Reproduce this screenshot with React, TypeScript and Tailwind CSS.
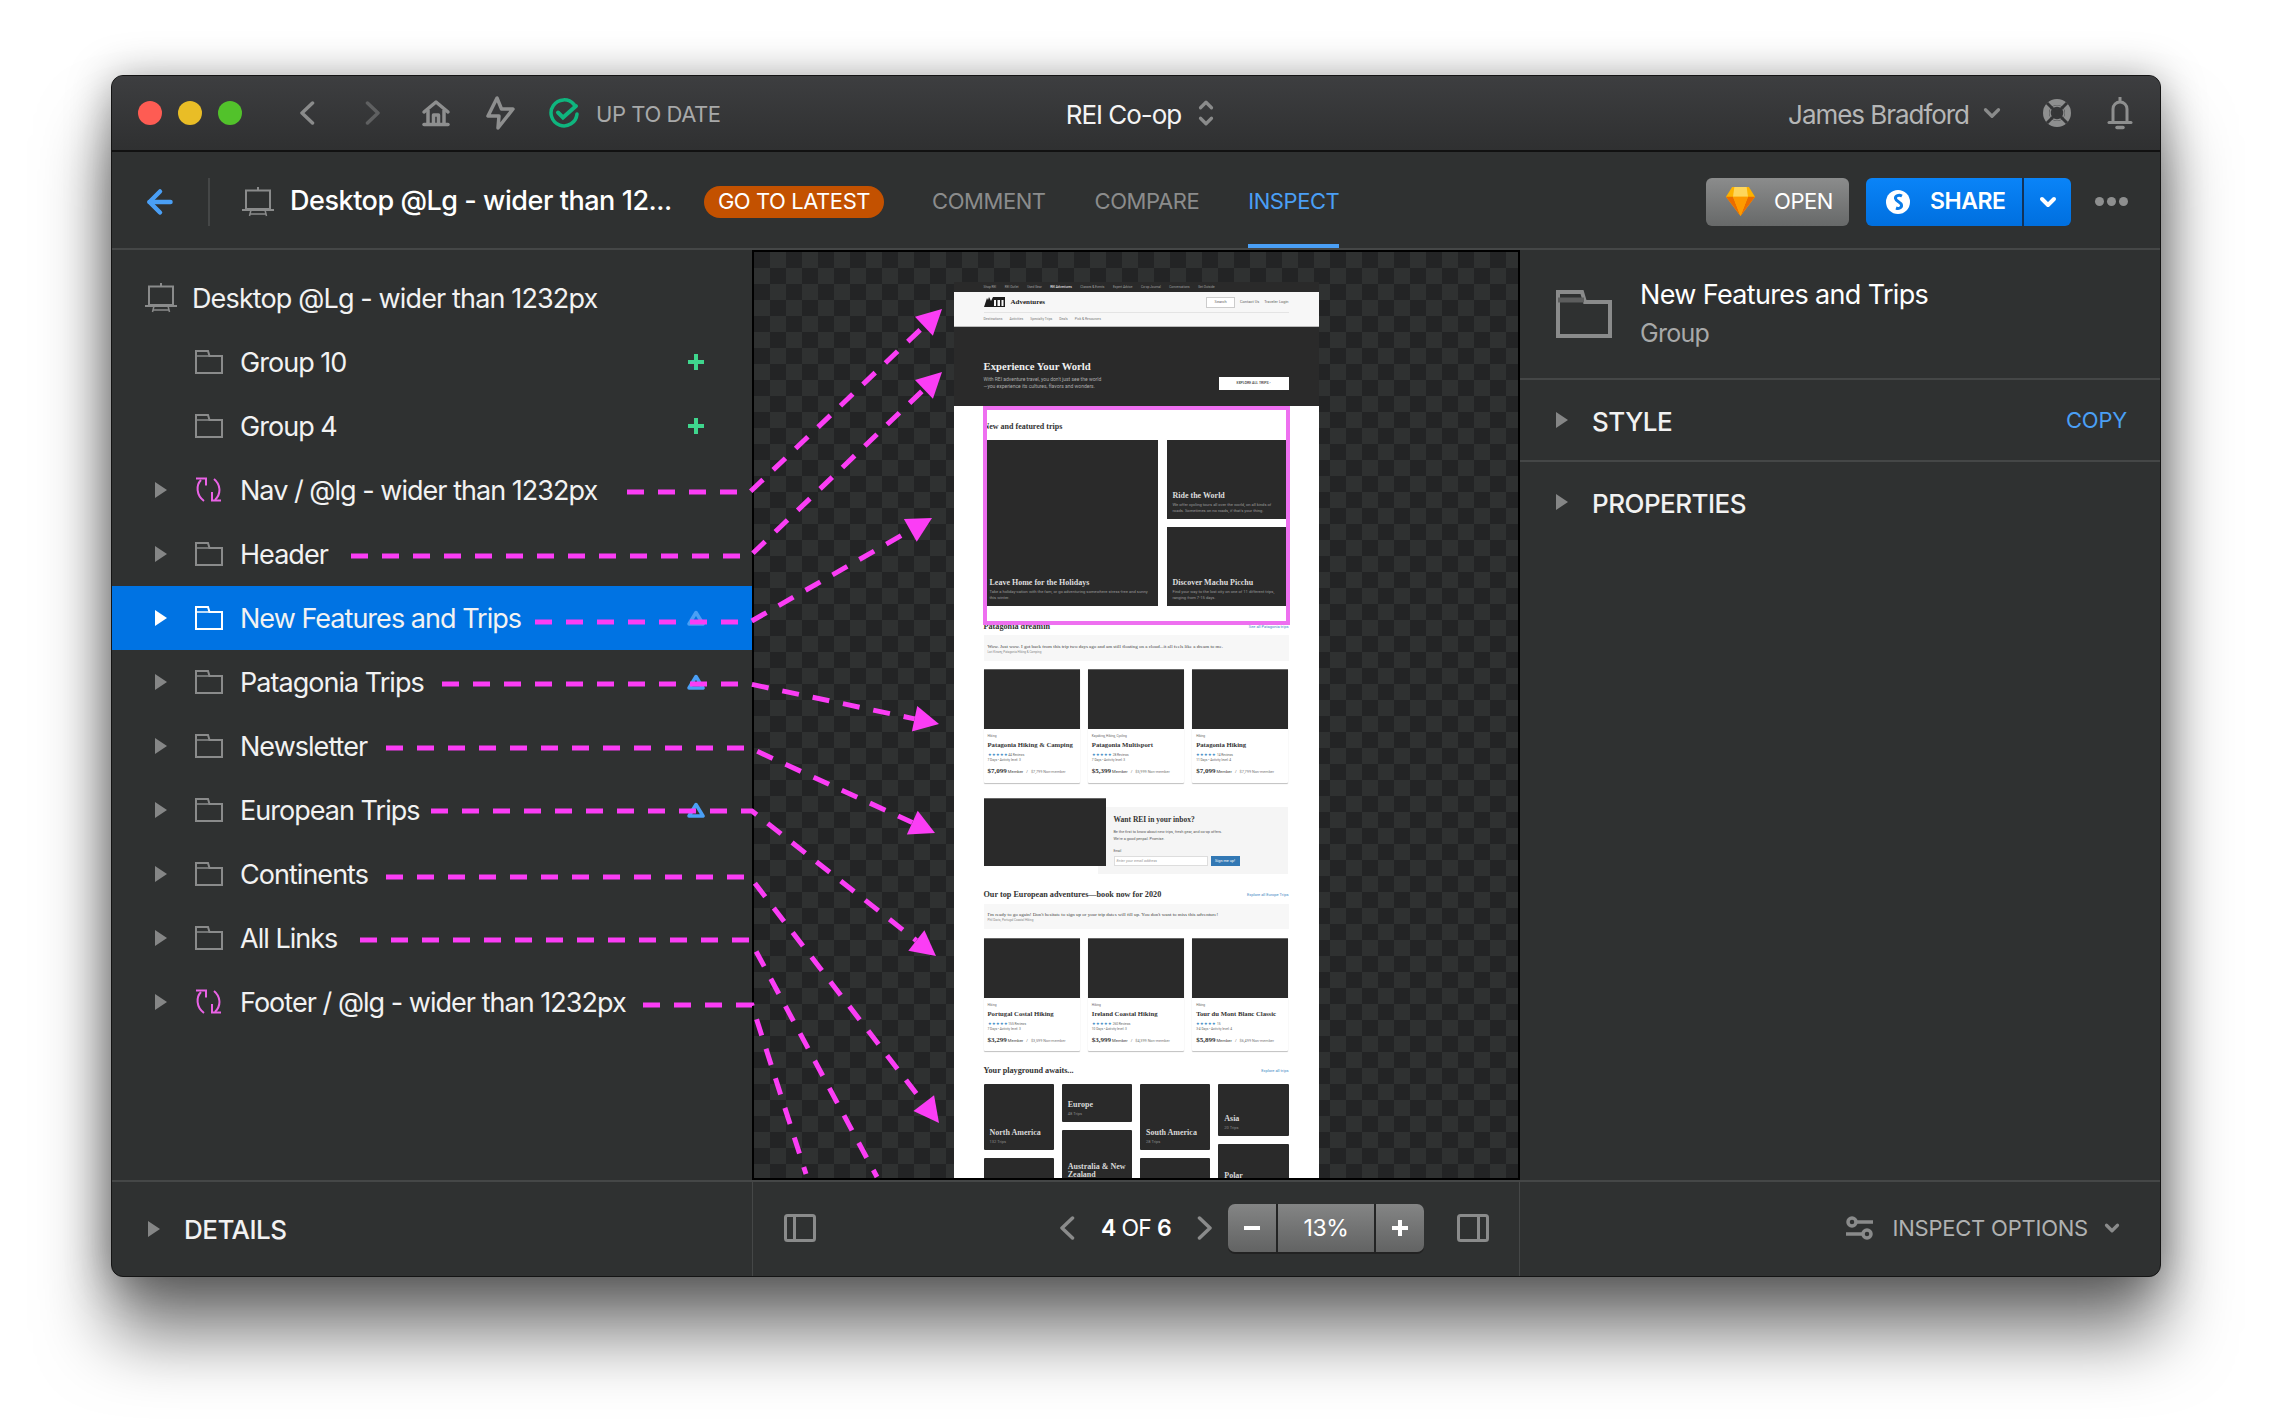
import type { ReactNode } from 'react';
import { ChevronDown, ChevronUp, ArrowLeft } from 'lucide-react';

type RowIcon = 'folder' | 'sync';

interface LayerRow {
    name: string;
    icon: RowIcon;
    caret?: boolean;
    badge?: 'plus' | 'triangle';
    selected?: boolean;
}

const layers: LayerRow[] = [
    { name: 'Group 10', icon: 'folder', badge: 'plus' },
    { name: 'Group 4', icon: 'folder', badge: 'plus' },
    { name: 'Nav / @lg - wider than 1232px', icon: 'sync', caret: true },
    { name: 'Header', icon: 'folder', caret: true },
    { name: 'New Features and Trips', icon: 'folder', caret: true, badge: 'triangle', selected: true },
    { name: 'Patagonia Trips', icon: 'folder', caret: true, badge: 'triangle' },
    { name: 'Newsletter', icon: 'folder', caret: true },
    { name: 'European Trips', icon: 'folder', caret: true, badge: 'triangle' },
    { name: 'Continents', icon: 'folder', caret: true },
    { name: 'All Links', icon: 'folder', caret: true },
    { name: 'Footer / @lg - wider than 1232px', icon: 'sync', caret: true },
];

// dashed leaders, page coordinates: start of the run, where it bends, arrow tip
const leaders: { x: number; y: number; bend: number; tip: [number, number]; head: boolean }[] = [
    { x: 627, y: 492, bend: 750, tip: [942, 309], head: true },
    { x: 351, y: 556, bend: 750, tip: [942, 372], head: true },
    { x: 535, y: 622, bend: 750, tip: [932, 518], head: true },
    { x: 442, y: 684, bend: 750, tip: [939, 724], head: true },
    { x: 386, y: 748, bend: 750, tip: [935, 833], head: true },
    { x: 431, y: 811, bend: 752, tip: [936, 956], head: true },
    { x: 386, y: 877, bend: 750, tip: [939, 1123], head: true },
    { x: 360, y: 940, bend: 750, tip: [877, 1177], head: false },
    { x: 643, y: 1005, bend: 752, tip: [806, 1174], head: false },
];

function Leaders() {
    return (
        <svg className="absolute left-0 top-0 z-20 pointer-events-none" width="2272" height="1424" fill="none">
            {leaders.map((l) => {
                const dx = l.tip[0] - l.bend;
                const dy = l.tip[1] - l.y;
                const len = Math.hypot(dx, dy);
                const ux = dx / len;
                const uy = dy / len;
                const bx = l.tip[0] - ux * 25;
                const by = l.tip[1] - uy * 25;
                const end = l.head ? `${bx} ${by}` : `${l.tip[0]} ${l.tip[1]}`;
                return (
                    <g key={l.y}>
                        <path d={`M${l.x} ${l.y} H${l.bend} L${end}`} stroke="#fb3df5" strokeWidth="5" strokeDasharray="17 14" />
                        {l.head && (
                            <polygon
                                fill="#fb3df5"
                                points={`${l.tip[0]},${l.tip[1]} ${bx - uy * 13},${by + ux * 13} ${bx + uy * 13},${by - ux * 13}`}
                            />
                        )}
                    </g>
                );
            })}
        </svg>
    );
}

function NavChevron({ dir, color, className = '' }: { dir: 'left' | 'right'; color: string; className?: string }) {
    return (
        <svg className={className} width="16" height="24" viewBox="0 0 16 24" fill="none" stroke={color} strokeWidth="3.5" strokeLinecap="round" strokeLinejoin="round">
            <path d={dir === 'left' ? 'M13.5 2L3 12l10.5 10' : 'M2.5 2L13 12 2.5 22'} />
        </svg>
    );
}

function FolderIcon({ selected = false }: { selected?: boolean }) {
    const c = selected ? '#ffffff' : '#8a8b8b';
    return (
        <svg width="28" height="24" viewBox="0 0 28 24" fill="none" stroke={c} strokeWidth="2">
            <path d="M1 23V1h12l1.5 5H27v17z" />
            <path d="M1 6h13.5" strokeWidth="1.5" />
        </svg>
    );
}

function SyncIcon() {
    return (
        <svg width="26" height="26" viewBox="0 0 26 26" fill="none" stroke="#ea63e6" strokeWidth="2">
            <path d="M6 3C1 8 1 18 9 24" />
            <path d="M1 1.5h10v7" />
            <path d="M19 2c6 5 8 14 1 21" />
            <path d="M17 15v8.500h9" />
        </svg>
    );
}

function EaselIcon() {
    return (
        <svg width="32" height="30" viewBox="0 0 32 30" fill="none" stroke="#8a8b8b" strokeWidth="2">
            <path d="M16 0v3M4 3.500h24V22H4zM0 23h32" />
            <path d="M9 23l-1.500 6M23 23l1.500 6M8 27h16" strokeWidth="1.500" />
        </svg>
    );
}

function Caret({ light = false }: { light?: boolean }) {
    return (
        <span
            className={`w-0 h-0 border-y-[8px] border-y-transparent border-l-[12px] ${light ? 'border-l-white' : 'border-l-[#858686]'}`}
        />
    );
}

function LayerItem({ row }: { row: LayerRow }) {
    return (
        <div className={`h-16 flex items-center ${row.selected ? 'bg-[#0073e3]' : ''}`}>
            <div className="w-[40px] flex justify-start shrink-0 ml-[43px]">
                {row.caret && <Caret light={row.selected} />}
            </div>
            <div className="w-[45px] shrink-0 flex justify-start">
                {row.icon === 'folder' ? <FolderIcon selected={row.selected} /> : <SyncIcon />}
            </div>
            <span className="mt-[3px] text-[27px] tracking-[-0.036em] text-[#f2f2f2] whitespace-nowrap flex-1">{row.name}</span>
            {row.badge === 'plus' && (
                <svg className="mr-[48px]" width="16" height="16" viewBox="0 0 16 16" stroke="#3fd68d" strokeWidth="4">
                    <path d="M8 0v16M0 8h16" />
                </svg>
            )}
            {row.badge === 'triangle' && (
                <svg className="mr-[47px]" width="18" height="16" viewBox="0 0 18 16" fill="none" stroke="#4a9ff5" strokeWidth="3.5" strokeLinejoin="round">
                    <path d="M9 2.500L16 14H2z" />
                </svg>
            )}
        </div>
    );
}

/* ---- the little artboard in the middle ---- */

const serif = "font-['Liberation_Serif',serif]";

function TripCard({ tag, title, stars, meta, price, other }: { tag: string; title: string; stars: string; meta: string; price: string; other: string }) {
    return (
        <div className="flex-1 bg-white shadow-[0_1px_1px_rgba(0,0,0,0.25)] rounded-[1px] flex flex-col">
            <div className="h-[60px] bg-[#2a2a2a] border-t border-[#666]" />
            <div className="px-[4px] pt-[5px] flex flex-col text-[#666] text-[3.2px] leading-[4px]">
                <span>{tag}</span>
                <span className={`${serif} font-bold text-[#333] text-[6.7px] leading-[8px] mt-[3px] whitespace-nowrap`}>{title}</span>
                <span className="mt-[4px] whitespace-nowrap">
                    <span className="text-[#2f7fc1] text-[4px] leading-[4px]">★★★★★</span> {stars}
                </span>
                <span className="mt-[1px] whitespace-nowrap">{meta}</span>
                <span className="mt-[5px] whitespace-nowrap flex items-baseline h-[8px] leading-[8px]">
                    <span className={`${serif} font-bold text-[#333] text-[7px]`}>{price}</span>
                    <span className="text-[#444] text-[4.2px] ml-[1px]">Member</span>
                    <span className="text-[4px] mx-[3px]">/</span>
                    <span className="text-[3.8px] text-[#777]">{other}</span>
                </span>
            </div>
        </div>
    );
}

function SectionHead({ title, link }: { title: string; link: string }) {
    return (
        <div className="flex items-center justify-between">
            <span className={`${serif} font-bold text-[#333] text-[8.2px] leading-[12px]`}>{title}</span>
            <span className="text-[#3f88c5] text-[4px]">{link}</span>
        </div>
    );
}

function Quote({ text, by, className }: { text: string; by: string; className: string }) {
    return (
        <div className={`bg-[#f7f7f7] px-[4px] flex flex-col justify-center ${className}`}>
            <span className={`${serif} text-[#444] text-[5px] leading-[7px]`}>{text}</span>
            <span className="text-[#888] text-[3px] leading-[4px]">{by}</span>
        </div>
    );
}

function PlaceTile({ name, trips, h }: { name: string; trips: string; h: string }) {
    return (
        <div className={`bg-[#2a2a2a] rounded-[1px] shrink-0 px-[6px] pb-[6px] flex flex-col justify-end ${h}`}>
            {name && <span className={`${serif} font-bold text-[#d8d8d8] text-[8px] leading-[8px]`}>{name}</span>}
            {trips && <span className="text-[#8a8a8a] text-[4px] leading-[5px] mt-[2px]">{trips}</span>}
        </div>
    );
}

function BigTile({ title, blurb, className }: { title: string; blurb: string; className: string }) {
    return (
        <div className={`bg-[#2a2a2a] px-[6px] pb-[6px] flex flex-col justify-end ${className}`}>
            <span className={`${serif} font-bold text-[#ddd] text-[8px] leading-[10px] whitespace-nowrap`}>{title}</span>
            <span className="text-[#999] text-[4.100px] leading-[5.300px] mt-[1px]">{blurb}</span>
        </div>
    );
}

function Artboard() {
    return (
        <div className="relative w-[365px] h-[896px] mt-[30px] bg-white font-['Roboto',sans-serif] shrink-0 overflow-hidden">
            {/* nav strip */}
            <div className="h-[10px] bg-[#2a2a2a] pl-[30px] flex items-center gap-[8.5px] text-[3.2px] text-[#a0a0a0] whitespace-nowrap">
                <span>Shop REI</span><span>REI Outlet</span><span>Used Gear</span>
                <span className="text-white">REI Adventures</span>
                <span>Classes &amp; Events</span><span>Expert Advice</span><span>Co-op Journal</span><span>Conversations</span><span>Get Outside</span>
            </div>
            {/* header */}
            <div className="h-[34px] bg-[#f7f7f7] px-[30px] flex flex-col">
                <div className="h-[21px] flex items-center border-b border-[#e4e4e4]">
                    <svg width="21" height="14" viewBox="0 0 21 14" fill="#1d1d1d" className="mt-[1px]">
                        <path d="M0 11L3 2l1 2 1-3 2 4 2-4h12v10H0z" />
                        <path d="M10 4h2v6h-2zM13.500 4h2.500v6h-2.500zM17.500 4h2v6h-2z" fill="#f7f7f7" />
                    </svg>
                    <span className={`${serif} font-bold text-[#222] text-[7px] ml-[6px]`}>Adventures</span>
                    <div className="ml-auto flex items-center gap-[5px] text-[3.900px] text-[#666] whitespace-nowrap">
                        <span className="w-[29px] h-[11px] bg-white border border-[#ccc] flex items-center justify-center">Search</span>
                        <span>Contact Us</span>
                        <span>Traveler Login</span>
                    </div>
                </div>
                <div className="flex-1 flex items-center gap-[7px] text-[3.4px] text-[#777] whitespace-nowrap">
                    <span>Destinations</span><span>Activities</span><span>Specialty Trips</span><span>Deals</span><span>Pick &amp; Resources</span>
                </div>
            </div>
            {/* hero */}
            <div className="h-[80px] bg-[#2a2a2a] border-t border-[#bbb] px-[30px] pb-[16px] flex items-end justify-between">
                <div className="flex flex-col">
                    <span className={`${serif} font-bold text-[#eee] text-[10.7px] leading-[14px] mb-[3px]`}>Experience Your World</span>
                    <span className="text-[#aaa] text-[5px] leading-[7px]">With REI adventure travel, you don't just see the world</span>
                    <span className="text-[#aaa] text-[5px] leading-[7px]">—you experience its cultures, flavors and wonders.</span>
                </div>
                <span className="w-[70px] h-[13px] bg-white flex items-center justify-center text-[#333] text-[3.5px] font-medium whitespace-nowrap">EXPLORE ALL TRIPS  ›</span>
            </div>

            <div className="px-[30px] flex flex-col">
                {/* new and featured */}
                <div className={`${serif} font-bold text-[#333] text-[8px] leading-[14px] mt-[14px] mb-[6px]`}>New and featured trips</div>
                <div className="h-[166px] flex gap-[9px]">
                    <BigTile className="w-[174px]" title="Leave Home for the Holidays" blurb="Take a holiday-cation with the fam, or go adventuring somewhere stress-free and sunny this winter." />
                    <div className="flex-1 flex flex-col gap-[8px]">
                        <BigTile className="flex-1" title="Ride the World" blurb="We offer cycling tours all over the world, on all kinds of roads. Sometimes on no roads, if that's your thing." />
                        <BigTile className="flex-1" title="Discover Machu Picchu" blurb="Find your way to the lost city on one of 11 different trips, ranging from 7-15 days." />
                    </div>
                </div>

                {/* patagonia */}
                <div className="mt-[15px]">
                    <SectionHead title="Patagonia dreamin'" link="See all Patagonia trips" />
                </div>
                <Quote className="mt-[2px] h-[26px]" text="Wow. Just wow. I got back from this trip two days ago and am still floating on a cloud...it all feels like a dream to me." by="Lori Kinsey, Patagonia Hiking & Camping" />
                <div className="mt-[8px] h-[114px] flex gap-[8px]">
                    <TripCard tag="Hiking" title="Patagonia Hiking & Camping" stars="44 Reviews" meta="7 Days  •  Activity level: 3" price="$7,099" other="$7,799 Non-member" />
                    <TripCard tag="Kayaking, Hiking, Cycling" title="Patagonia Multisport" stars="28 Reviews" meta="7 Days  •  Activity level: 3" price="$5,399" other="$5,999 Non-member" />
                    <TripCard tag="Hiking" title="Patagonia Hiking" stars="14 Reviews" meta="11 Days  •  Activity level: 4" price="$7,099" other="$7,799 Non-member" />
                </div>

                {/* newsletter */}
                <div className="mt-[15px] h-[76px] flex items-start">
                    <div className="relative z-10 w-[122px] h-[68px] bg-[#2a2a2a] border-t border-[#666] shrink-0" />
                    <div className="-ml-[8px] mt-[9px] w-[190px] h-[67px] bg-[#f5f5f5] pl-[16px] pt-[8px] flex flex-col text-[#555] text-[3.8px] leading-[7px]">
                        <span className={`${serif} font-bold text-[#333] text-[7.5px] leading-[10px] mb-[3px]`}>Want REI in your inbox?</span>
                        <span>Be the first to know about new trips, fresh gear, and co-op offers.</span>
                        <span>We're a good penpal. Promise.</span>
                        <span className="mt-[7px] leading-[5px] text-[3.2px]">Email</span>
                        <div className="flex gap-[3px] mt-[1.5px]">
                            <span className="w-[94px] h-[10px] bg-white border border-[#ddd] pl-[2px] text-[#999] leading-[8px] italic">Enter your email address</span>
                            <span className="w-[29px] h-[10px] bg-[#3278b4] text-white text-center leading-[10px]">Sign me up!</span>
                        </div>
                    </div>
                </div>

                {/* europe */}
                <div className="mt-[15px]">
                    <SectionHead title="Our top European adventures—book now for 2020" link="Explore all Europe Trips" />
                </div>
                <Quote className="mt-[3px] h-[25px]" text="I'm ready to go again! Don't hesitate to sign up or your trip dates will fill up. You don't want to miss this adventure!" by="Phil Davis, Portugal Coastal Hiking" />
                <div className="mt-[9px] h-[113px] flex gap-[8px]">
                    <TripCard tag="Hiking" title="Portugal Costal Hiking" stars="155 Reviews" meta="7 Days  •  Activity level: 3" price="$3,299" other="$3,599 Non-member" />
                    <TripCard tag="Hiking" title="Ireland Coastal Hiking" stars="260 Reviews" meta="10 Days  •  Activity level: 3" price="$3,999" other="$4,399 Non-member" />
                    <TripCard tag="Hiking" title="Tour du Mont Blanc Classic" stars="15" meta="3-4 Days  •  Activity level: 4" price="$5,899" other="$6,499 Non-member" />
                </div>

                {/* playground */}
                <div className="mt-[14px] mb-[7px]">
                    <SectionHead title="Your playground awaits..." link="Explore all trips" />
                </div>
                <div className="flex gap-[8px]">
                    <div className="flex-1 flex flex-col gap-[8px]">
                        <PlaceTile name="North America" trips="132 Trips" h="h-[66px]" />
                        <PlaceTile name="" trips="" h="h-[66px]" />
                    </div>
                    <div className="flex-1 flex flex-col gap-[8px]">
                        <PlaceTile name="Europe" trips="48 Trips" h="h-[38px]" />
                        <PlaceTile name="Australia & New Zealand" trips="32 Trips" h="h-[62px]" />
                    </div>
                    <div className="flex-1 flex flex-col gap-[8px]">
                        <PlaceTile name="South America" trips="28 Trips" h="h-[66px]" />
                        <PlaceTile name="" trips="" h="h-[66px]" />
                    </div>
                    <div className="flex-1 flex flex-col gap-[8px]">
                        <PlaceTile name="Asia" trips="20 Trips" h="h-[52px]" />
                        <PlaceTile name="Polar" trips="12 Trips" h="h-[49px]" />
                    </div>
                </div>
            </div>

            {/* selection box */}
            <div className="absolute left-[29px] top-[124px] w-[307px] h-[219px] border-[4px] border-[#ee6ff0]" />
        </div>
    );
}

function SectionRow({ label, children }: { label: string; children?: ReactNode }) {
    return (
        <div className="h-[80px] flex items-center pl-[36px] pr-[33px]">
            <Caret />
            <span className="ml-[24px] mt-[2px] text-[26px] font-medium tracking-[-0.02em] text-[#f2f2f2] flex-1">{label}</span>
            {children}
        </div>
    );
}

export default function App() {
    return (
        <div className="relative w-[2272px] h-[1424px] bg-white overflow-hidden pt-[75px] pl-[111px] font-['Inter',sans-serif]">
            <div className="w-[2050px] h-[1202px] rounded-[12px] overflow-hidden border border-[#141414] bg-[#2f3131] flex flex-col shadow-[0_58px_70px_rgba(0,0,0,0.52),0_4px_44px_rgba(0,0,0,0.38)]">
                {/* title bar */}
                <div className="h-[76px] shrink-0 flex items-center border-b-2 border-[#111] bg-gradient-to-b from-[#3d3e40] to-[#2f3031]">
                    <div className="w-[683px] flex items-center pl-[26px]">
                        <span className="w-6 h-6 rounded-full bg-[#fe5c53]" />
                        <span className="w-6 h-6 rounded-full bg-[#e9bd26] ml-4" />
                        <span className="w-6 h-6 rounded-full bg-[#52c22b] ml-4" />
                        <NavChevron className="ml-[57px]" dir="left" color="#8a8b8b" />
                        <NavChevron className="ml-[50px]" dir="right" color="#5f6061" />
                        <svg className="ml-[40px]" width="30" height="28" viewBox="0 0 30 28" fill="none" stroke="#8e8f8f" strokeWidth="3.5" strokeLinejoin="round">
                            <path d="M3 13L15 3l12 10" strokeLinecap="round" />
                            <path d="M7 11v14M23 11v14M12.500 25v-9h5v9" />
                            <path d="M3 25.500h24" strokeLinecap="round" />
                        </svg>
                        <svg className="ml-[34px]" width="30" height="34" viewBox="0 0 30 34" fill="none" stroke="#8e8f8f" strokeWidth="3.5" strokeLinejoin="round">
                            <path d="M12 2L3 20h11l-1 12 15-19H16.500z" />
                        </svg>
                        <svg className="ml-[34px]" width="30" height="30" viewBox="0 0 30 30" fill="none" stroke="#0fb57e" strokeWidth="3.5" strokeLinecap="round">
                            <path d="M25 6.500A13 13 0 1 0 28 16" />
                            <path d="M9 14.500l5 5L27 8" strokeWidth="4" />
                        </svg>
                        <span className="ml-[17px] mt-[2px] text-[22px] tracking-[-0.02em] text-[#a8a9a9]">UP TO DATE</span>
                    </div>
                    <div className="w-[682px] flex items-center justify-center pl-[11px]">
                        <span className="mt-[2px] text-[26px] tracking-[-0.04em] text-[#f4f4f4]">REI Co-op</span>
                        <div className="ml-[14px] flex flex-col -space-y-[6px] text-[#8a8b8b]">
                            <ChevronUp size={22} strokeWidth={3.5} />
                            <ChevronDown size={22} strokeWidth={3.5} />
                        </div>
                    </div>
                    <div className="flex-1 flex items-center justify-end pr-[27px]">
                        <span className="mt-[2px] text-[26px] tracking-[-0.04em] text-[#b5b6b6]">James Bradford</span>
                        <ChevronDown className="ml-[10px] text-[#8a8b8b]" size={26} strokeWidth={3} />
                        <svg className="ml-[38px]" width="28" height="28" viewBox="0 0 28 28" fill="none">
                            <circle cx="14" cy="14" r="11" stroke="#8e8f8f" strokeWidth="6" />
                            <circle cx="14" cy="14" r="7" stroke="#8e8f8f" strokeWidth="1.5" />
                            <path d="M4 4l20 20M24 4L4 24" stroke="#343536" strokeWidth="3" />
                        </svg>
                        <svg className="ml-[36px]" width="26" height="34" viewBox="0 0 26 34" fill="none" stroke="#8e8f8f" strokeWidth="3">
                            <path d="M13 1v4M6 26V13a7 7 0 0 1 14 0v13" />
                            <path d="M2 26.500h22" strokeLinecap="round" />
                            <path d="M10 31.500h6" strokeWidth="3.5" strokeLinecap="round" />
                        </svg>
                    </div>
                </div>

                {/* file bar */}
                <div className="h-[98px] shrink-0 flex items-center pt-[3px] border-b-2 border-[#454747]">
                    <ArrowLeft className="ml-[30px] text-[#4a9ff5]" size={36} strokeWidth={3} />
                    <div className="ml-[30px] w-[2px] h-12 bg-[#454747]" />
                    <div className="ml-[32px]"><EaselIcon /></div>
                    <span className="ml-[16px] w-[384px] text-[27px] font-medium tracking-[-0.017em] text-white whitespace-nowrap">Desktop @Lg - wider than 12...</span>
                    <span className="ml-[30px] w-[180px] h-8 rounded-full bg-[#c35100] text-white text-[22px] tracking-[-0.02em] flex items-center justify-center">GO TO LATEST</span>
                    <div className="ml-[48px] flex items-start gap-[49px] h-full text-[22px] tracking-[-0.02em] text-[#8b8c8c]">
                        <span className="h-full flex items-center">COMMENT</span>
                        <span className="h-full flex items-center">COMPARE</span>
                        <span className="h-full flex items-center text-[#4a9ff5] border-b-4 border-[#4a9ff5] pt-[4px]">INSPECT</span>
                    </div>
                    <div className="ml-auto flex items-center pr-[32px]">
                        <div className="w-[143px] h-12 rounded-[6px] bg-gradient-to-b from-[#8b8c8c] to-[#676969] flex items-center pl-[20px]">
                            <svg width="29" height="29" viewBox="0 0 33 27" preserveAspectRatio="none">
                                <polygon points="7,0 26,0 33,9 16.5,27 0,9" fill="#fdb300" />
                                <polygon points="9.5,0 23.5,0 25,9 8,9" fill="#fdd65c" />
                                <polygon points="0,9 8,9 16.5,27" fill="#ea6c00" />
                                <polygon points="33,9 25,9 16.5,27" fill="#ea6c00" />
                                <polygon points="8,9 25,9 16.5,27" fill="#fd9a00" />
                            </svg>
                            <span className="ml-[19px] text-[22px] tracking-[-0.02em] text-white">OPEN</span>
                        </div>
                        <div className="ml-[17px] w-[205px] h-12 rounded-[6px] bg-gradient-to-b from-[#0a84f8] to-[#006fdf] flex items-center">
                            <div className="flex-1 h-full flex items-center pl-[20px] border-r-2 border-[#12335a]">
                                <svg width="24" height="24" viewBox="0 0 24 24" fill="none">
                                    <circle cx="12" cy="12" r="12" fill="#fff" />
                                    <path d="M16 6c-3-1.500-7-.5-6.500 2.500S15 12 15.500 15s-3 4-5.500 3" stroke="#0a7ce8" strokeWidth="3" />
                                </svg>
                                <span className="ml-[20px] text-[23px] font-semibold tracking-[-0.02em] text-white">SHARE</span>
                            </div>
                            <div className="w-[47px] flex justify-center">
                                <ChevronDown className="text-white" size={24} strokeWidth={4} />
                            </div>
                        </div>
                        <div className="ml-[24px] flex gap-[3px]">
                            <span className="w-[9px] h-[9px] rounded-full bg-[#8e8f8f]" />
                            <span className="w-[9px] h-[9px] rounded-full bg-[#8e8f8f]" />
                            <span className="w-[9px] h-[9px] rounded-full bg-[#8e8f8f]" />
                        </div>
                    </div>
                </div>

                {/* panels */}
                <div className="h-[930px] shrink-0 flex">
                    <div className="w-[640px] shrink-0 pt-4">
                        <div className="h-16 flex items-center pl-[33px]">
                            <EaselIcon />
                            <span className="ml-[15px] mt-[3px] text-[27px] tracking-[-0.032em] text-[#f2f2f2]">Desktop @Lg - wider than 1232px</span>
                        </div>
                        {layers.map((row) => (
                            <LayerItem key={row.name} row={row} />
                        ))}
                    </div>
                    <div className="w-[768px] shrink-0 border-2 border-black overflow-hidden flex justify-center bg-[image:repeating-conic-gradient(#2f3131_0_25%,#232425_0_50%)] bg-[length:32px_32px]">
                        <Artboard />
                    </div>
                    <div className="flex-1">
                        <div className="h-[130px] flex items-center pl-[36px] border-b-2 border-[#454747]">
                            <svg width="56" height="48" viewBox="0 0 56 48" fill="none" stroke="#8a8b8b" strokeWidth="4">
                                <path d="M2 46V2h24l3 10h25v34z" />
                                <path d="M2 10h26" strokeWidth="5" stroke="#5d5e5e" />
                            </svg>
                            <div className="ml-[28px] flex flex-col">
                                <span className="text-[27px] leading-[38px] tracking-[-0.024em] text-white">New Features and Trips</span>
                                <span className="text-[25px] leading-[38px] tracking-[-0.03em] text-[#a8a9a9]">Group</span>
                            </div>
                        </div>
                        <div className="border-b-2 border-[#454747]">
                            <SectionRow label="STYLE">
                                <span className="mt-[1px] text-[22px] tracking-[-0.01em] text-[#4a9ff5]">COPY</span>
                            </SectionRow>
                        </div>
                        <SectionRow label="PROPERTIES" />
                    </div>
                </div>

                {/* footer */}
                <div className="flex-1 flex border-t-2 border-[#454747]">
                    <div className="w-[640px] shrink-0 flex items-center pl-[36px]">
                        <Caret />
                        <span className="ml-[24px] text-[26px] font-medium tracking-[-0.02em] text-[#f2f2f2]">DETAILS</span>
                    </div>
                    <div className="w-[768px] shrink-0 border-x border-[#454747] flex items-center pl-[31px] pb-[2px]">
                        <svg width="32" height="28" viewBox="0 0 32 28" fill="none" stroke="#8a8b8b" strokeWidth="3">
                            <rect x="1.5" y="1.5" width="29" height="25" rx="2" />
                            <path d="M10.5 1.5v25" />
                        </svg>
                        <NavChevron className="ml-[243px]" dir="left" color="#8a8b8b" />
                        <span className="ml-[26px] w-[70px] text-[23px] tracking-[-0.03em] text-white whitespace-nowrap">
                            <span className="font-semibold">4</span> OF <span className="font-semibold">6</span>
                        </span>
                        <NavChevron className="ml-[26px]" dir="right" color="#8a8b8b" />
                        <div className="ml-[15px] w-[196px] h-12 rounded-[7px] bg-gradient-to-b from-[#848585] to-[#626363] flex items-center text-white shadow-[0_2px_0_#222]">
                            <span className="w-[50px] h-full flex items-center justify-center border-r-2 border-[#232424]">
                                <span className="w-[16px] h-[4px] bg-white" />
                            </span>
                            <span className="w-[98px] h-full flex items-center justify-center text-[23px] tracking-[-0.02em] border-r-2 border-[#232424]">13%</span>
                            <span className="flex-1 flex items-center justify-center h-full">
                                <svg width="16" height="16" viewBox="0 0 16 16" stroke="#fff" strokeWidth="4"><path d="M8 0v16M0 8h16" /></svg>
                            </span>
                        </div>
                        <svg className="ml-[33px]" width="32" height="28" viewBox="0 0 32 28" fill="none" stroke="#8a8b8b" strokeWidth="3">
                            <rect x="1.5" y="1.5" width="29" height="25" rx="2" />
                            <path d="M21.5 1.5v25" />
                        </svg>
                    </div>
                    <div className="flex-1 flex items-center justify-end pr-[37px] pb-[2px]">
                        <svg width="27" height="24" viewBox="0 0 27 24" fill="none" stroke="#8a8b8b" strokeWidth="3.5">
                            <path d="M9 6h18M0 18h18" />
                            <circle cx="6" cy="6" r="4" fill="#2f3131" />
                            <circle cx="21" cy="18" r="4" fill="#2f3131" />
                        </svg>
                        <span className="ml-[19px] text-[22px] tracking-[-0.01em] text-[#b0b1b1]">INSPECT OPTIONS</span>
                        <ChevronDown className="ml-[13px] text-[#8a8b8b]" size={22} strokeWidth={3.5} />
                    </div>
                </div>
            </div>
            <Leaders />
        </div>
    );
}
